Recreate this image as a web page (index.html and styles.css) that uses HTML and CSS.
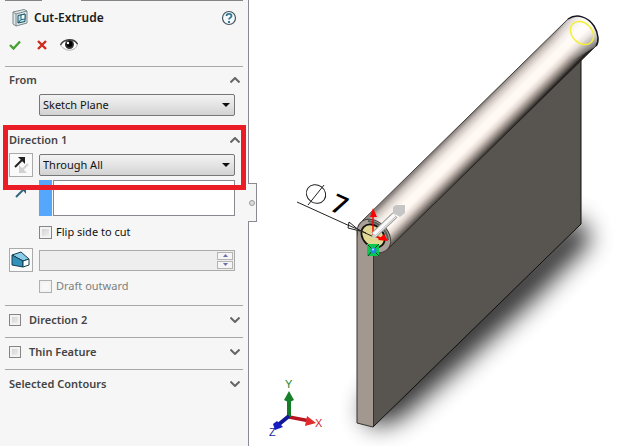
FILE: index.html
```html
<!DOCTYPE html>
<html lang="en">
<head>
    <meta charset="UTF-8">
    <meta name="viewport" content="width=device-width, initial-scale=1.0">
    <title>Cut-Extrude</title>
    <link rel="stylesheet" href="styles.css">
</head>
<body>
    <aside class="panel">
        <div class="tab-strip"><span class="tab-edge"></span><span class="tab-edge wide"></span></div>

        <header class="panel-header">
            <div class="title-row">
                <svg class="feature-icon" width="16" height="18" viewBox="0 0 16 18">
                    <path d="M1 3L12 0.500L15 2V14L4 17L1 15Z" fill="#dfe9e9" stroke="#7b898b"/>
                    <path d="M1 3L4 5V17M4 5L15 2" fill="none" stroke="#7b898b"/>
                    <path d="M6 6.500L13 5V12.500L6 14Z" fill="#b4e4ee" stroke="#1d5060"/>
                    <path d="M9 6V10.500L13 10V5.200Z" fill="#fff" stroke="#1a6074"/>
                    <path d="M6 14L9 10.500" stroke="#1d5060"/>
                </svg>
                <h1>Cut-Extrude</h1>
                <button class="icon-btn help" aria-label="Help">
                    <svg width="16" height="16" viewBox="0 0 16 16">
                        <circle cx="8" cy="8" r="6.500" fill="#f5fafc" stroke="#45555e" stroke-width="1.200"/>
                        <path d="M5.500 6C5.500 3.200 10.500 3.200 10.500 6C10.500 7.600 8 7.700 8 9.600" fill="none" stroke="#2d7694" stroke-width="1.800"/>
                        <rect x="7" y="11" width="2" height="2" fill="#2d7694"/>
                    </svg>
                </button>
            </div>
            <div class="toolbar">
                <button class="icon-btn" aria-label="OK">
                    <svg width="12" height="10" viewBox="0 0 12 10"><path d="M1 5L4.500 8.500L11 1.500" fill="none" stroke="#49a133" stroke-width="2.400"/></svg>
                </button>
                <button class="icon-btn" aria-label="Cancel">
                    <svg width="10" height="10" viewBox="0 0 10 10"><path d="M1 1L9 9M9 1L1 9" fill="none" stroke="#cf2a1c" stroke-width="2.400"/></svg>
                </button>
                <button class="icon-btn eye" aria-label="Preview">
                    <svg width="18" height="14" viewBox="0 0 18 14">
                        <path d="M0.500 7C4 1 14 0 17.500 6C16 13 6 15 0.500 7Z" fill="#fff" stroke="#aaa"/>
                        <path d="M0.500 7C4 0.500 14 0 17.500 6" fill="none" stroke="#444" stroke-width="1.500"/>
                        <circle cx="9.500" cy="6.500" r="4.500" fill="#333"/>
                        <circle cx="9.500" cy="6" r="3" fill="#000"/>
                        <circle cx="8" cy="5" r="1.200" fill="#fff"/>
                    </svg>
                </button>
            </div>
        </header>

        <section class="group">
            <div class="group-head">
                <h2>From</h2>
                <button class="icon-btn" aria-label="Collapse From">
                    <svg width="10" height="6" viewBox="0 0 10 6"><path d="M0.500 5.500L5 1L9.500 5.500" class="chevron"/></svg>
                </button>
            </div>
            <div class="row indent">
                <select aria-label="Start condition"><option>Sketch Plane</option></select>
            </div>
        </section>

        <section class="group highlighted">
            <div class="group-head">
                <h2>Direction 1</h2>
                <button class="icon-btn" aria-label="Collapse Direction 1">
                    <svg width="10" height="6" viewBox="0 0 10 6"><path d="M0.500 5.500L5 1L9.500 5.500" class="chevron"/></svg>
                </button>
            </div>
            <div class="row">
                <button class="tool-btn" aria-label="Reverse direction">
                    <svg width="18" height="20" viewBox="0 0 18 20">
                        <path d="M16 9L10 15" stroke="#d1d1d1" stroke-width="2"/>
                        <path d="M7 18V10L15 18Z" fill="#d1d1d1"/>
                        <path d="M3 12L10 5" stroke="#222" stroke-width="2"/>
                        <path d="M6 2H13V9Z" fill="#222"/>
                    </svg>
                </button>
                <select aria-label="End condition"><option>Through All</option></select>
            </div>
            <div class="row list-row">
                <svg class="row-icon" width="24" height="20" viewBox="0 0 24 20">
                    <path d="M7 14L15 6" stroke="#32657f" stroke-width="2"/>
                    <path d="M11 4H17V11Z" fill="#32657f"/>
                </svg>
                <div class="selection">
                    <span class="selection-color"></span>
                    <textarea aria-label="Direction of extrusion"></textarea>
                </div>
            </div>
            <label class="check indent"><input type="checkbox"> Flip side to cut</label>
            <div class="row draft-row">
                <button class="tool-btn" aria-label="Draft on/off">
                    <svg width="20" height="18" viewBox="0 0 20 18">
                        <path d="M1 4L10 1L18 8L12 10L1 4Z" fill="#8bcde6" stroke="#173e50"/>
                        <path d="M1 4L12 10V16L1 14Z" fill="#3290ba" stroke="#173e50"/>
                        <path d="M12 10L18 8V14L12 16Z" fill="#fff" stroke="#173e50"/>
                    </svg>
                </button>
                <div class="spin">
                    <input type="text" aria-label="Draft angle" disabled>
                    <span class="spin-buttons">
                        <button disabled aria-label="Increase"><svg width="5" height="3" viewBox="0 0 5 3"><path d="M0 3L2.500 0L5 3Z"/></svg></button>
                        <button disabled aria-label="Decrease"><svg width="5" height="3" viewBox="0 0 5 3"><path d="M0 0L2.500 3L5 0Z"/></svg></button>
                    </span>
                </div>
            </div>
            <label class="check indent disabled"><input type="checkbox" disabled> Draft outward</label>
        </section>

        <section class="group collapsed">
            <div class="group-head">
                <input type="checkbox" id="direction2">
                <h2><label for="direction2">Direction 2</label></h2>
                <button class="icon-btn" aria-label="Expand Direction 2">
                    <svg width="10" height="6" viewBox="0 0 10 6"><path d="M0.500 0.500L5 5L9.500 0.500" class="chevron"/></svg>
                </button>
            </div>
        </section>

        <section class="group collapsed">
            <div class="group-head">
                <input type="checkbox" id="thin">
                <h2><label for="thin">Thin Feature</label></h2>
                <button class="icon-btn" aria-label="Expand Thin Feature">
                    <svg width="10" height="6" viewBox="0 0 10 6"><path d="M0.500 0.500L5 5L9.500 0.500" class="chevron"/></svg>
                </button>
            </div>
        </section>

        <section class="group collapsed">
            <div class="group-head">
                <h2>Selected Contours</h2>
                <button class="icon-btn" aria-label="Expand Selected Contours">
                    <svg width="10" height="6" viewBox="0 0 10 6"><path d="M0.500 0.500L5 5L9.500 0.500" class="chevron"/></svg>
                </button>
            </div>
        </section>

        <button class="panel-handle" aria-label="Hide panel"><span></span></button>
    </aside>

    <main class="viewport">
        <svg class="model" viewBox="249 0 377 446">
            <defs>
                <linearGradient id="tube" gradientUnits="userSpaceOnUse" x1="466" y1="120" x2="493" y2="147">
                    <stop offset="0" stop-color="#8d8682"/>
                    <stop offset="0.1" stop-color="#c9c0bb"/>
                    <stop offset="0.25" stop-color="#f1e9e4"/>
                    <stop offset="0.4" stop-color="#fffaf5"/>
                    <stop offset="0.56" stop-color="#fff8f2"/>
                    <stop offset="0.7" stop-color="#dfd5ce"/>
                    <stop offset="0.83" stop-color="#9a9089"/>
                    <stop offset="0.94" stop-color="#54504c"/>
                    <stop offset="1" stop-color="#24211f"/>
                </linearGradient>
                <linearGradient id="cap" gradientUnits="userSpaceOnUse" x1="560" y1="50" x2="588" y2="22">
                    <stop offset="0" stop-color="#fff" stop-opacity="0"/>
                    <stop offset="1" stop-color="#fff" stop-opacity="0.6"/>
                </linearGradient>
                <filter id="soft" x="-30%" y="-30%" width="160%" height="160%">
                    <feGaussianBlur stdDeviation="12"/>
                </filter>
            </defs>

            <!-- shadow on the floor -->
            <path d="M362 412L373 427L400 419L466 361L530 303L592 240L575 215L373 390Z" fill="#000" opacity="0.8" filter="url(#soft)"/>

            <!-- plate -->
            <path d="M373 250L581 55V224L373 427Z" fill="#58544f" stroke="#111"/>
            <path d="M357 228L373 246V427L357 423Z" fill="#a2988f"/>
            <path d="M357 228V423L373 427" fill="none" stroke="#36322f"/>

            <!-- tube -->
            <path d="M362 221L568 19C577 13 588 17 594 26C599 34 599 42 596 46L388 249Z" fill="url(#tube)"/>
            <path d="M566 21C576 13 588 17 594 26C599 34 599 42 595 47L573 60L552 38Z" fill="url(#cap)"/>
            <path d="M362 221L568 19M596 46L388 249" fill="none" stroke="#24211f" stroke-width="0.800"/>
            <path d="M568 19C577 13 588 17 594 26C599 34 599 42 596 46" fill="none" stroke="#171520" stroke-width="1.500"/>
            <ellipse cx="582" cy="33" rx="13" ry="10" transform="rotate(45 582 33)" fill="none" stroke="#f3ef39" stroke-width="1.500"/>
            <ellipse cx="374" cy="236" rx="19" ry="14" transform="rotate(45 374 236)" fill="#aaa097" stroke="#44403c"/>
            <path d="M368 221C379 222 387 230 388 240" fill="none" stroke="#56605a" stroke-width="2"/>
            <path d="M358 229L372 250L366 262H358Z" fill="#a2988f"/>
            <ellipse cx="373" cy="236" rx="13" ry="10" transform="rotate(45 373 236)" fill="#e1d993" stroke="#111" stroke-width="1.800"/>

            <!-- diameter dimension -->
            <path d="M297 202L374 237" fill="none" stroke="#222"/>
            <path d="M349 222L348 228L360 231Z" fill="#fff" stroke="#222"/>
            <path d="M348 225L366 233" stroke="#222"/>
            <ellipse cx="316" cy="194" rx="10" ry="9" transform="rotate(35 316 194)" fill="none" stroke="#222"/>
            <path d="M308 205L324 185" stroke="#222"/>
            <text class="dimension" x="329" y="210" transform="rotate(24 329 210)">7</text>

            <!-- sketch origin and drag arrow -->
            <path d="M373 235V216" stroke="#f00" stroke-width="1.500"/>
            <path d="M373 208L377 217H370Z" fill="#f00"/>
            <path d="M373 235L382 239" stroke="#f00" stroke-width="2"/>
            <path d="M378 240L384 234L388 241Z" fill="#f00"/>
            <rect x="367" y="244" width="12" height="12" fill="#08ca4e"/>
            <path d="M368 256L373 250L379 256M379 244L373 250L368 245" fill="none" stroke="#073c25"/>
            <circle cx="373.500" cy="250.500" r="3" fill="#2486e2"/>
            <circle cx="373" cy="249.500" r="1" fill="#b6ecff"/>
            <path d="M374 235L395 215" stroke="#999" stroke-width="7"/>
            <path d="M374 235L395 215" stroke="#f8f8f8" stroke-width="5"/>
            <path d="M375 236L396 216" stroke="#bbb"/>
            <path d="M393 207L396 205H405V213L400 217L393 213Z" fill="#c5c5c5"/>
            <circle cx="374" cy="236" r="2" fill="#ccd6cf"/>

            <!-- axis triad -->
            <path d="M289 417L310 421" stroke="#b91521" stroke-width="3.500"/>
            <path d="M307 416L316 423L305 426Z" fill="#e22b2b"/>
            <path d="M289 417V398" stroke="#147b27" stroke-width="4"/>
            <path d="M289 391L294 400Q289 403 284 400Z" fill="#16802b"/>
            <path d="M289 416L278 425" stroke="#121895" stroke-width="4"/>
            <path d="M277 421L283 427L275 430L273 424Z" fill="#171fc0"/>
            <text class="axis axis-x" x="315" y="427">X</text>
            <text class="axis axis-y" x="285" y="388">Y</text>
            <text class="axis axis-z" x="269" y="436">Z</text>
        </svg>
    </main>
</body>
</html>
```

FILE: styles.css
```css
* {
    box-sizing: border-box;
}

body {
    margin: 0;
    min-height: 100vh;
    display: flex;
    background-color: #fff;
    color: #111;
    font-family: "Noto Sans", "Open Sans", sans-serif;
    font-size: 11px;
    line-height: 16px;
}

h1, h2 {
    margin: 0;
    flex: 1;
    font-weight: 600;
}

h1 {
    font-size: 12px;
    color: #1b1b1b;
}

h2 {
    font-size: 11px;
    color: #444;
}

button, select, input, textarea {
    margin: 0;
    font: inherit;
    color: inherit;
}

/* property panel */
.panel {
    position: relative;
    flex: 0 0 249px;
    padding: 0 5px;
    background-color: #f6f6f6;
    border-right: 1px solid #8a8a92;
}

.tab-strip {
    display: flex;
    justify-content: space-between;
    gap: 39px;
    height: 1px;
}

.tab-edge {
    width: 37px;
    background-color: #858585;
}

.tab-edge.wide {
    flex: 1;
}

.panel-header {
    padding: 0 6px 11px 4px;
}

.title-row {
    display: flex;
    align-items: center;
    gap: 6px;
    height: 34px;
    padding-left: 3px;
}

.toolbar {
    display: flex;
    align-items: center;
    gap: 16px;
    height: 20px;
}

.icon-btn {
    display: flex;
    padding: 0;
    border: 0;
    background: none;
}

.icon-btn.eye {
    margin-left: -3px;
}

.chevron {
    fill: none;
    stroke: #666;
    stroke-width: 2;
}

/* groups */
.group {
    padding: 0 8px 9px 4px;
    border-top: 1px solid #a8a8a8;
}

.group-head {
    display: flex;
    align-items: center;
    gap: 8px;
    height: 26px;
    margin-right: -5px;
}

.group.collapsed {
    padding-bottom: 3px;
}

.collapsed .group-head {
    height: 28px;
}

.highlighted {
    position: relative;
    padding-bottom: 11px;
}

.highlighted::after {
    content: "";
    position: absolute;
    top: -2px;
    left: -2px;
    right: -3px;
    height: 55px;
    border: 5px solid #ea1c26;
    pointer-events: none;
}

.row {
    display: flex;
    align-items: center;
    gap: 6px;
    min-height: 24px;
}

.indent {
    padding-left: 30px;
}

select {
    flex: 1;
    height: 22px;
    padding: 0 3px;
    border: 1px solid #777;
    border-radius: 2px;
    appearance: none;
    background: linear-gradient(#f3f3f3, #e4e4e4 50%, #d2d2d2);
}

.row:has(select) {
    position: relative;
}

.row:has(select)::after {
    content: "";
    position: absolute;
    right: 5px;
    border: 4px solid transparent;
    border-top-color: #111;
    border-bottom: 0;
    pointer-events: none;
}

.tool-btn {
    display: flex;
    align-items: center;
    justify-content: center;
    width: 24px;
    height: 24px;
    padding: 0;
    border: 1px solid #aaa;
    background-color: #fafafa;
}

.list-row {
    align-items: flex-start;
    margin: 3px 0 8px;
}

.row-icon {
    margin-top: 3px;
}

.selection {
    display: flex;
    flex: 1;
    gap: 1px;
    height: 36px;
}

.selection-color {
    width: 13px;
    background-color: #55a7fb;
}

textarea {
    flex: 1;
    min-width: 0;
    resize: none;
    border: 1px solid #888890;
    background-color: #fff;
}

.check {
    display: flex;
    align-items: center;
    gap: 4px;
    height: 16px;
}

.check.disabled {
    color: #7d7d7d;
}

input[type="checkbox"] {
    width: 12px;
    height: 12px;
    appearance: none;
    border: 1px solid #858585;
    background: linear-gradient(135deg, #ccc, #f5f5f5);
    box-shadow: inset 0 0 0 2px #f3f3f3;
}

.check input[type="checkbox"] {
    width: 13px;
    height: 13px;
}

input[type="checkbox"]:disabled {
    border-color: #b0b0b0;
    background: #f8f8f8;
}

.draft-row {
    margin: 8px 0 6px;
}

.spin {
    display: flex;
    flex: 1;
    height: 21px;
    padding: 1px;
    border: 1px solid #aaa;
    background-color: #eee;
}

.spin input {
    flex: 1;
    min-width: 0;
    padding: 0 3px;
    border: 0;
    background: none;
}

.spin-buttons {
    display: flex;
    flex-direction: column;
    width: 16px;
    gap: 1px;
}

.spin-buttons button {
    display: flex;
    flex: 1;
    align-items: center;
    justify-content: center;
    padding: 0;
    border: 1px solid #b4b4b4;
    background-color: #f5f5f5;
}

.spin-buttons path {
    fill: #6770a8;
}

.panel-handle {
    position: absolute;
    top: 183px;
    right: -9px;
    display: flex;
    align-items: center;
    justify-content: center;
    width: 9px;
    height: 39px;
    padding: 0;
    border: 1px solid #8a8a92;
    border-left: 0;
    background-color: #f6f6f6;
}

.panel-handle span {
    width: 6px;
    height: 6px;
    border: 1px solid #999;
    border-radius: 50%;
    background-color: #ddd;
}

/* graphics area */
.viewport {
    flex: 1;
    display: flex;
    min-width: 0;
}

.model {
    width: 100%;
    height: 100vh;
}

.dimension {
    font-family: "Open Sans", sans-serif;
    font-size: 26px;
    font-weight: 600;
    fill: #000;
}

.axis {
    font-family: "Liberation Sans", Arial, sans-serif;
    font-size: 11px;
}

.axis-x {
    fill: #d8212c;
}

.axis-y {
    fill: #1c7f30;
}

.axis-z {
    fill: #1b1f9e;
}
```
